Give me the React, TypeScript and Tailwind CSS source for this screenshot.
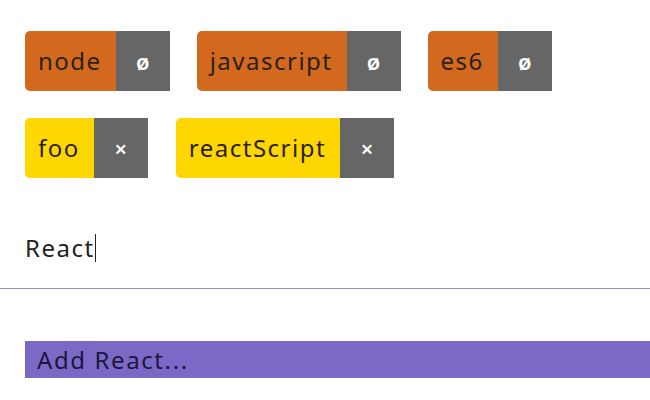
import React from 'react';

type Tag = { label: string; kind: 'fixed' | 'removable' };

const fixedTags: Tag[] = [
  { label: 'node', kind: 'fixed' },
  { label: 'javascript', kind: 'fixed' },
  { label: 'es6', kind: 'fixed' },
];

const userTags: Tag[] = [
  { label: 'foo', kind: 'removable' },
  { label: 'reactScript', kind: 'removable' },
];

function TagChip({ tag }: { tag: Tag }) {
  const fixed = tag.kind === 'fixed';
  return (
    <div className="flex h-[60px]">
      <span
        className={`flex items-center rounded-l-[5px] pl-[13px] pr-[14px] text-[24px] tracking-[1.5px] text-[#2a2118] ${
          fixed ? 'bg-[#d2691e]' : 'bg-[#ffd700]'
        }`}
      >
        {tag.label}
      </span>
      <button className="flex w-[54px] items-center justify-center bg-[#666666] text-[22px] font-semibold text-white">
        {fixed ? 'ø' : '×'}
      </button>
    </div>
  );
}

export default function App() {
  return (
    <div
      className="h-[400px] w-[650px] overflow-hidden bg-white"
      style={{ fontFamily: '"Noto Sans", "Open Sans", sans-serif' }}
    >
      <div className="flex flex-col gap-[27px] pl-[25px] pt-[31px]">
        <div className="flex gap-[27px]">
          {fixedTags.map((t) => (
            <TagChip key={t.label} tag={t} />
          ))}
        </div>
        <div className="flex gap-[28px]">
          {userTags.map((t) => (
            <TagChip key={t.label} tag={t} />
          ))}
        </div>
      </div>

      {/* input */}
      <div className="mt-[40px] flex h-[71px] items-start border-b-[1.5px] border-[#9a8fd2] pl-[25px] pt-[14px]">
        <span className="text-[24px] leading-[32px] tracking-[1.5px] text-[#222]">React</span>
        <span className="mt-[2px] h-[28px] w-px bg-[#222]" />
      </div>

      {/* suggestion */}
      <div className="mt-[52px] pl-[25px]">
        <div className="flex h-[37px] items-center bg-[#7b69c5] pl-[12px] text-[24px] tracking-[1.6px] text-[#1c1640]">
          Add React...
        </div>
      </div>
    </div>
  );
}
